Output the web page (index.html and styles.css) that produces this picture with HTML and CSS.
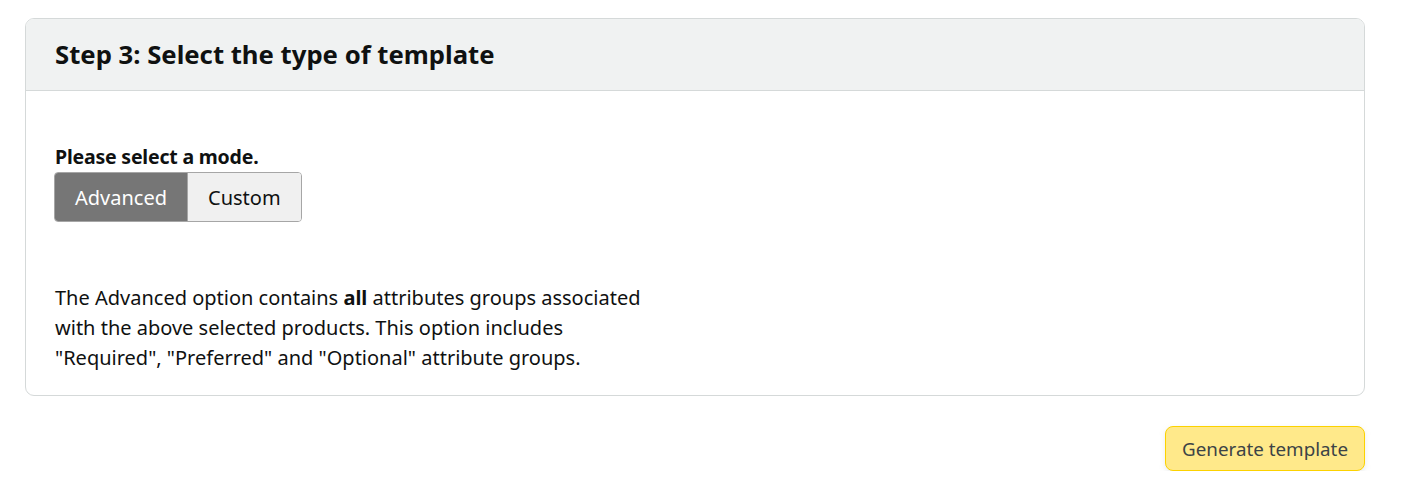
FILE: index.html
```html
<!DOCTYPE html>
<html>
<head>
<meta charset="utf-8">
<link rel="stylesheet" href="styles.css">
</head>
<body>
<div class="page">
  <section class="card">
    <header class="card-head">
      <h2 class="card-title">Step 3: Select the type of template</h2>
    </header>
    <div class="card-body">
      <div class="mode-label">Please select a mode.</div>
      <div class="toggle">
        <button class="toggle-btn active">Advanced</button>
        <button class="toggle-btn">Custom</button>
      </div>
      <p class="desc">The Advanced option contains <b>all</b> attributes groups associated with the above selected products. This option includes "Required", "Preferred" and "Optional" attribute groups.</p>
    </div>
  </section>
  <div class="actions">
    <button class="gen-btn">Generate template</button>
  </div>
</div>
</body>
</html>
```
FILE: styles.css
```css
html, body {
  margin: 0;
  padding: 0;
  background: #fff;
}
body {
  font-family: "Noto Sans", "Open Sans", sans-serif;
  color: #0f1111;
}
.page {
  padding: 18px 56px 0 25px;
}
.card {
  border: 1px solid #d5d9d9;
  border-radius: 9px;
  overflow: hidden;
}
.card-head {
  background: #f0f2f2;
  border-bottom: 1px solid #d5d9d9;
  height: 71px;
  display: flex;
  align-items: center;
  padding: 0 29px;
}
.card-title {
  margin: 0;
  font-size: 25.7px;
  font-weight: 700;
}
.card-body {
  padding: 54px 28px 22px;
}
.mode-label {
  padding-left: 1px;
  font-size: 19.5px;
  font-weight: 700;
  line-height: 24px;
  margin-bottom: 3px;
  letter-spacing: -0.2px;
}
.toggle {
  display: inline-flex;
  border: 1px solid #a6a6a6;
  border-radius: 4px;
  overflow: hidden;
}
.toggle-btn {
  font-family: inherit;
  font-size: 20px;
  border: none;
  height: 48px;
  padding: 0 20px;
  background: #f0f0f0;
  color: #0f1111;
}
.toggle-btn.active {
  background: #767676;
  color: #fff;
  border-right: 1px solid #a6a6a6;
}
.desc {
  margin: 61px 0 0 1px;
  width: 600px;
  font-size: 20px;
  line-height: 30px;
}
.actions {
  display: flex;
  justify-content: flex-end;
  margin-top: 30px;
}
.gen-btn {
  font-family: inherit;
  font-size: 18.8px;
  height: 45px;
  padding: 0 16px;
  background: #ffe98a;
  border: 1px solid #fcd200;
  border-radius: 8px;
  color: #3c4346;
  box-shadow: 0 2px 5px rgba(213,217,217,0.5);
}
```
